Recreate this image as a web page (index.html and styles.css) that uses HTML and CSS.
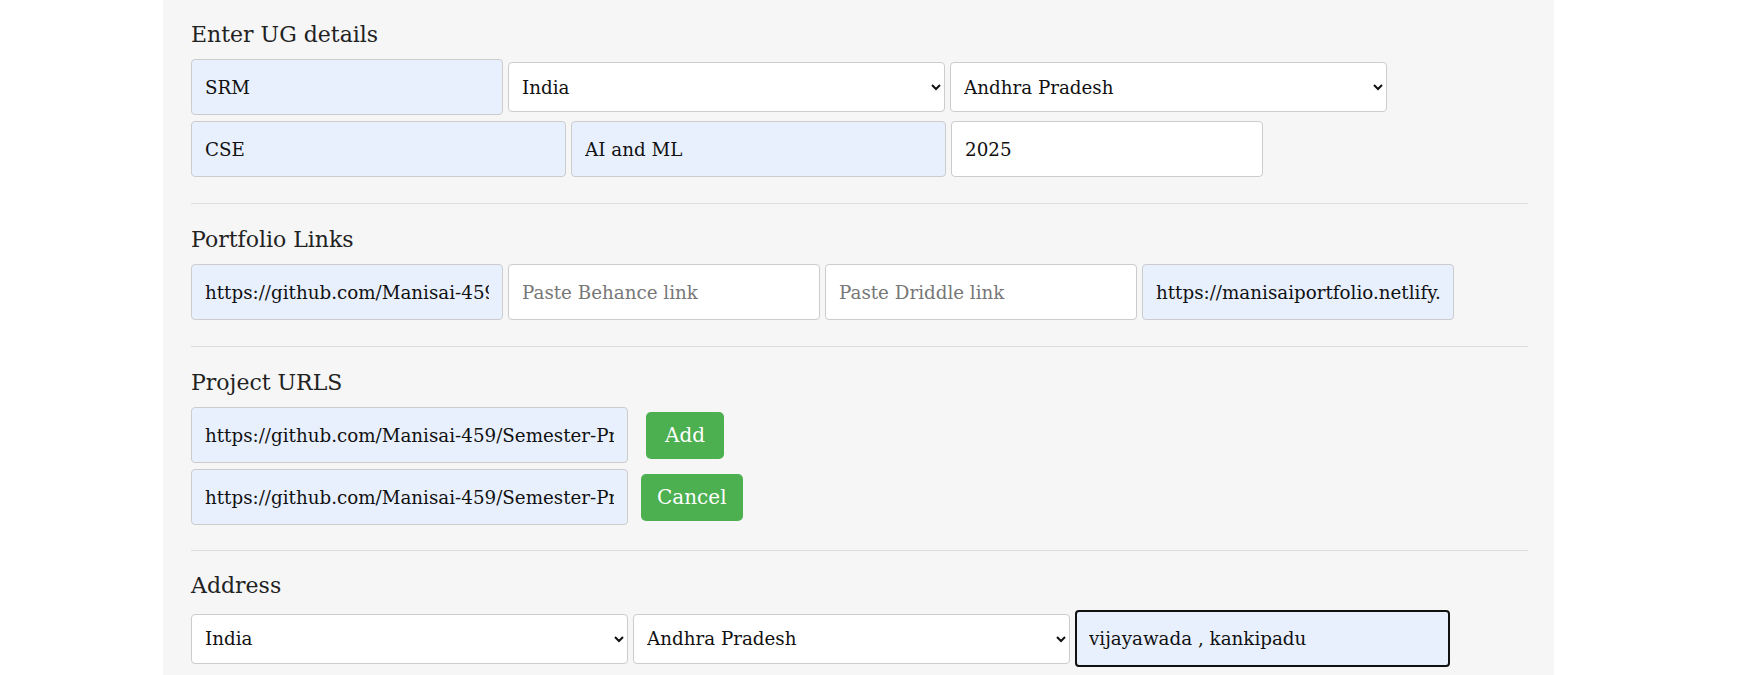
FILE: index.html
```html
<!DOCTYPE html>
<html lang="en">
<head>
<meta charset="utf-8">
<title>Profile form</title>
<link rel="stylesheet" href="styles.css">
</head>
<body>
<div class="panel">
  <section class="group first">
    <h3 class="group-title">Enter UG details</h3>
    <div class="rows">
      <div class="row">
        <input class="field w-s filled" type="text" value="SRM">
        <select class="field sel w-l"><option>India</option></select>
        <select class="field sel w-l"><option>Andhra Pradesh</option></select>
      </div>
      <div class="row">
        <input class="field w-m filled" type="text" value="CSE">
        <input class="field w-m filled" type="text" value="AI and ML">
        <input class="field w-s" type="text" value="2025">
      </div>
    </div>
  </section>

  <section class="group">
    <h3 class="group-title">Portfolio Links</h3>
    <div class="rows">
      <div class="row">
        <input class="field w-s filled" type="text" value="https://github.com/Manisai-459">
        <input class="field w-s" type="text" placeholder="Paste Behance link">
        <input class="field w-s" type="text" placeholder="Paste Driddle link">
        <input class="field w-s filled" type="text" value="https://manisaiportfolio.netlify.app">
      </div>
    </div>
  </section>

  <section class="group">
    <h3 class="group-title">Project URLS</h3>
    <div class="rows">
      <div class="row">
        <input class="field w-l filled" type="text" value="https://github.com/Manisai-459/Semester-Project">
        <button class="btn btn-add" type="button">Add</button>
      </div>
      <div class="row">
        <input class="field w-l filled" type="text" value="https://github.com/Manisai-459/Semester-Project">
        <button class="btn btn-cancel" type="button">Cancel</button>
      </div>
    </div>
  </section>

  <section class="group last">
    <h3 class="group-title">Address</h3>
    <div class="rows">
      <div class="row">
        <select class="field sel w-l"><option>India</option></select>
        <select class="field sel w-l"><option>Andhra Pradesh</option></select>
        <input class="field w-m filled focused" type="text" value="vijayawada , kankipadu">
      </div>
    </div>
  </section>
</div>
</body>
</html>
```

FILE: styles.css
```css
html, body {
  margin: 0;
  padding: 0;
  background: #ffffff;
}

body {
  font-family: "DejaVu Serif", Georgia, serif;
  color: #222222;
}

.panel {
  margin-left: 163px;
  width: 1391px;
  box-sizing: border-box;
  padding: 20px 26px 60px 28px;
  background: #f6f6f6;
}

.group {
  border-top: 1px solid #dddddd;
  margin-top: 26px;
}

.group.first {
  border-top: none;
  margin-top: 0;
}

.group.last {
  margin-top: 25px;
}

.group-title {
  margin: 21px 0 9px;
  font-size: 22px;
  line-height: 30px;
  font-weight: normal;
  color: #222222;
}

.group.first .group-title {
  margin-top: 0;
}

.group.last .group-title {
  margin-top: 20px;
  margin-bottom: 9px;
}

.rows {
  display: flex;
  flex-direction: column;
  gap: 6px;
}

.row {
  display: flex;
  align-items: center;
  gap: 5.5px;
}

.field {
  box-sizing: border-box;
  height: 56px;
  margin: 0;
  padding: 0 13px;
  border: 1px solid #cccccc;
  border-radius: 4px;
  background: #ffffff;
  font-family: "DejaVu Serif", Georgia, serif;
  font-size: 18.3px;
  color: #111111;
  outline: none;
}

.field::placeholder {
  color: #777777;
}

.field.filled {
  background: #e8f0fe;
}

.field.sel {
  height: 50px;
  padding: 0 9px;
}

.field.focused {
  height: 57px;
  border: 2px solid #111111;
  padding: 0 12px;
}

.w-s { width: 311.5px; }
.w-m { width: 374.5px; }
.w-l { width: 436.5px; }

.btn {
  height: 47px;
  border: none;
  border-radius: 5px;
  background: #4caf50;
  color: #ffffff;
  font-family: "DejaVu Serif", Georgia, serif;
  font-size: 20px;
  cursor: pointer;
}

.btn-add {
  margin-left: 13px;
  padding: 0 19px;
}

.btn-cancel {
  margin-left: 8px;
  padding: 0 16px;
}
```
